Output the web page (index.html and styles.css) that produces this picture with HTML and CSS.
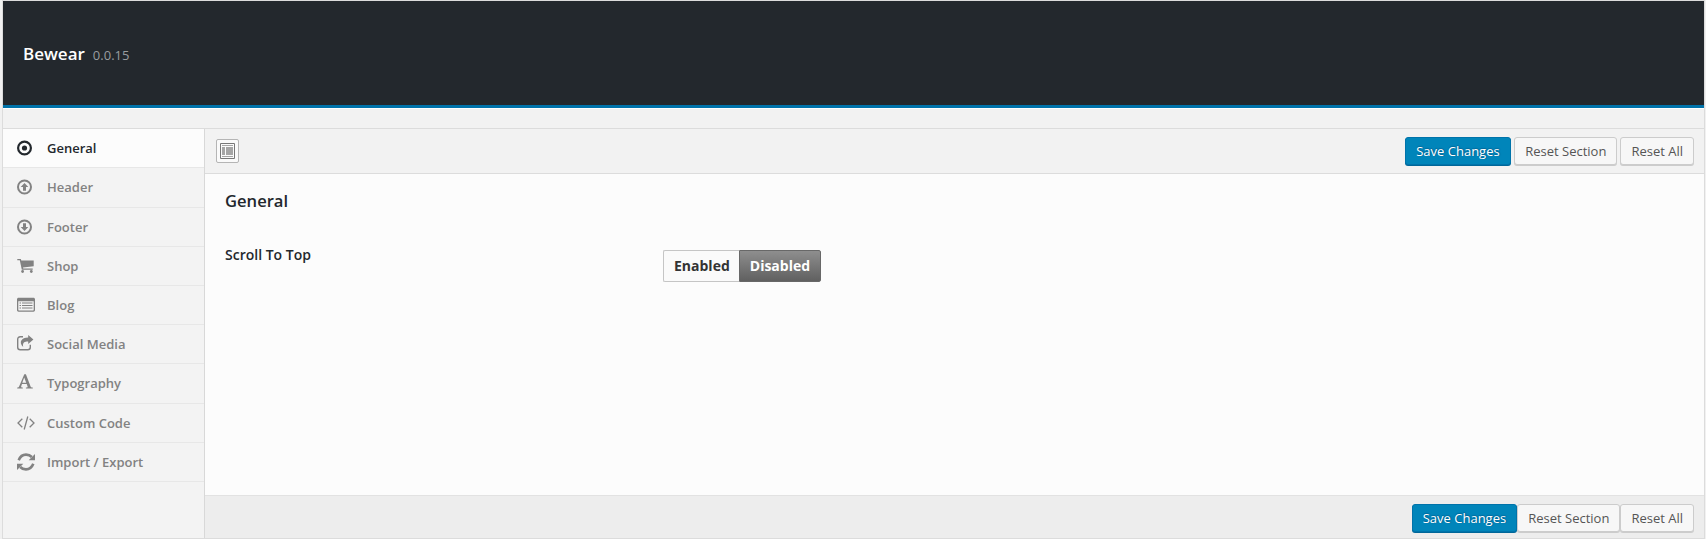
FILE: index.html
```html
<!DOCTYPE html>
<html lang="en">
<head>
<meta charset="utf-8">
<title>Bewear options</title>
<link rel="stylesheet" href="styles.css">
</head>
<body>
<div class="panel">
  <header class="masthead"><h1 class="brand">Bewear</h1><span class="version">0.0.15</span></header>
  <div class="strip"></div>
  <div class="columns">
    <nav class="sidebar">
      <a class="item active"><svg class="icon" viewBox="0 0 18 18"><circle cx="7.5" cy="9" r="6.4" fill="none" stroke="currentColor" stroke-width="2.2"/><circle cx="7.5" cy="9" r="2.6"/></svg><span>General</span></a>
      <a class="item tall"><svg class="icon" viewBox="0 0 18 18"><circle cx="7.5" cy="9" r="6.5" fill="none" stroke="currentColor" stroke-width="2"/><path d="M7.5 5 11.300 9H9v3.800H6V9H3.700z"/></svg><span>Header</span></a>
      <a class="item"><svg class="icon" viewBox="0 0 18 18"><circle cx="7.5" cy="9" r="6.5" fill="none" stroke="currentColor" stroke-width="2"/><path d="M7.5 13 3.700 9H6V5.200h3V9h2.300z"/></svg><span>Footer</span></a>
      <a class="item"><svg class="icon" viewBox="0 0 18 18"><path d="M.3 2h3.500l.5 1.400h12.400v5.800L6 10.500l.2 1.100h9.500v1.200H4.800L2.800 3.300H.3z"/><circle cx="5.6" cy="14.5" r="1.4"/><circle cx="14.3" cy="14.5" r="1.4"/></svg><span>Shop</span></a>
      <a class="item"><svg class="icon" viewBox="0 0 18 18"><path fill-rule="evenodd" d="M1.600 1.700h14.800c.9 0 1.600.7 1.600 1.600v10.800c0 .9-.7 1.600-1.600 1.600H1.600C.7 15.700 0 15 0 14.100V3.300c0-.9.7-1.600 1.600-1.600zM1.300 5.300v8.500c0 .4.200.6.600.6h14.200c.4 0 .6-.2.600-.6V5.300z"/><path d="M2.500 6.400H4v1.200H2.500zM5 6.400h10.500v1.200H5zM2.500 8.900H4v1.200H2.500zM5 8.900h10.500v1.200H5zM2.500 11.400H4v1.200H2.500zM5 11.400h10.500v1.200H5z"/></svg><span>Blog</span></a>
      <a class="item"><svg class="icon" viewBox="0 0 18 18"><path fill="none" stroke="currentColor" stroke-width="1.400" d="M6 1.700H3.200C1.700 1.700.7 2.700.7 4.200v8.100c0 1.500 1 2.500 2.500 2.500h7.600c1.500 0 2.500-1 2.500-2.500v-2.600"/><path d="M11.200 0 16.400 4.400l-5.200 4.500V6.400C7.500 6.400 5.300 7.500 6.200 12 1.300 7 4.500 2.500 11.200 2.500z"/></svg><span>Social Media</span></a>
      <a class="item tall"><svg class="icon" viewBox="0 0 18 18"><path fill-rule="evenodd" d="M7.300.200h1.600l4.700 12.200c.3.800.7 1 2.200 1.200v1H8.900v-1c1.700-.1 2-.4 1.600-1.400l-.8-2.200H5l-.7 1.900c-.4 1.200 0 1.600 1.500 1.700v1H.2v-1c1.200-.2 1.600-.5 2.100-1.700zM7.200 3.600 5.300 8.800h3.900z"/></svg><span>Typography</span></a>
      <a class="item"><svg class="icon" viewBox="0 0 18 18"><path fill="none" stroke="currentColor" stroke-width="1.300" d="M5.300 4.800 1 9l4.300 4.200M12.700 4.800 17 9l-4.300 4.200M10.800 2.500 7.200 15.500"/></svg><span>Custom Code</span></a>
      <a class="item"><svg class="icon" viewBox="0 0 18 18"><path fill="none" stroke="currentColor" stroke-width="2.600" d="M1.700 7.200C3 3.800 5.700 1.600 9 1.600c2.300 0 4.300.8 5.800 2.400M16.300 10.800C15 14.200 12.300 16.400 9 16.400c-2.300 0-4.300-.8-5.800-2.400"/><path d="M18 1v6.300h-6.300zM0 17v-6.300h6.300z"/></svg><span>Import / Export</span></a>
    </nav>
    <main class="main">
      <div class="toolbar">
        <button class="expand" aria-label="Expand"><svg viewBox="0 0 15 16"><path fill="none" stroke="#777" d="M.5.500h14v15H.5z"/><path fill="#a5a5a5" d="M2 2h11v1H2zM2 4h3v8H2zM6 4h7v8H6zM2 13h11v1H2z"/></svg></button>
        <div class="actions"><button class="btn primary">Save Changes</button><button class="btn">Reset Section</button><button class="btn">Reset All</button></div>
      </div>
      <section class="content">
        <h2 class="title">General</h2>
        <div class="field"><span class="label">Scroll To Top</span><div class="switch"><span class="on">Enabled</span><span class="off">Disabled</span></div></div>
      </section>
      <footer class="toolbar bottom">
        <div class="actions"><button class="btn primary">Save Changes</button><button class="btn">Reset Section</button><button class="btn">Reset All</button></div>
      </footer>
    </main>
  </div>
</div>
</body>
</html>
```
FILE: styles.css
```css
* { box-sizing: border-box; }
body { margin: 0; background: #f1f1f1; font-family: "Open Sans", sans-serif; font-size: 13px; color: #23282d; }
.panel { display: flex; flex-direction: column; width: 1703px; height: 539px; margin-left: 2px; border: 1px solid #dcdcdc; background: #f2f2f2; }
.masthead { display: flex; align-items: baseline; gap: 8px; height: 107px; padding: 40px 20px 0; background: #23282d; border-bottom: 3px solid #0073aa; }
.brand { margin: 0; color: #fff; font-size: 17px; line-height: 25px; font-weight: 600; }
.version { color: #999da0; font-size: 13px; }
.strip { height: 21px; border-top: 1px solid #fff; border-bottom: 1px solid #dcdcdc; }
.columns { display: flex; flex: 1; }
.sidebar { width: 202px; border-right: 1px solid #d8d8d8; background: #f3f3f3; }
.item { display: flex; align-items: center; gap: 12px; height: 39px; padding: 0 0 1px 14px; border-bottom: 1px solid #e7e7e7; color: #828282; font-weight: 600; }
.tall { height: 40px; }
.active { background: #fcfcfc; color: #23282d; }
.icon { width: 18px; height: 18px; fill: currentColor; }
.main { display: flex; flex: 1; flex-direction: column; }
.toolbar { display: flex; justify-content: space-between; height: 45px; padding: 8px 10px 0 11px; border-bottom: 1px solid #dcdcdc; }
.expand { width: 23px; height: 24px; margin-top: 2px; padding: 3px; border: 1px solid #b5b5b5; border-radius: 2px; background: #fafafa; }
.expand svg { display: block; width: 15px; height: 16px; }
.actions { display: flex; gap: 3px; margin-left: auto; }
.btn { height: 28px; padding: 0 10px; border: 1px solid #ccc; border-radius: 3px; background: #f7f7f7; box-shadow: 0 1px 0 #ccc; color: #555; font: 13px/26px "Open Sans", sans-serif; }
.primary { padding: 0 10.5px; border-color: #0073aa; background: #0085ba; box-shadow: 0 1px 0 #006799; color: #fff; text-shadow: 0 -1px 1px #006799, 1px 0 1px #006799; }
.content { flex: 1; padding: 15px 20px; background: #fcfcfc; }
.title { margin: 0; font-size: 16.6px; line-height: 24px; font-weight: 600; }
.field { display: flex; margin-top: 31px; }
.label { width: 438px; padding-top: 1px; font-size: 14px; line-height: 20px; font-weight: 600; }
.switch { display: flex; height: 32px; margin-top: 6px; font-size: 14px; line-height: 30px; font-weight: 700; }
.on { padding: 0 9px 0 10px; border: 1px solid #c5c5c5; border-right: 0; border-radius: 2px 0 0 2px; background: #fafafa; color: #333; }
.off { padding: 0 10px; border: 1px solid #686868; border-radius: 0 2px 2px 0; background: linear-gradient(#8e8e8e, #606060); color: #fff; }
.bottom { height: 43px; background: #ededed; border-top: 1px solid #e2e2e2; border-bottom: 0; }
.bottom .actions { gap: 0; }
.bottom .primary { padding: 0 10px; }
```
